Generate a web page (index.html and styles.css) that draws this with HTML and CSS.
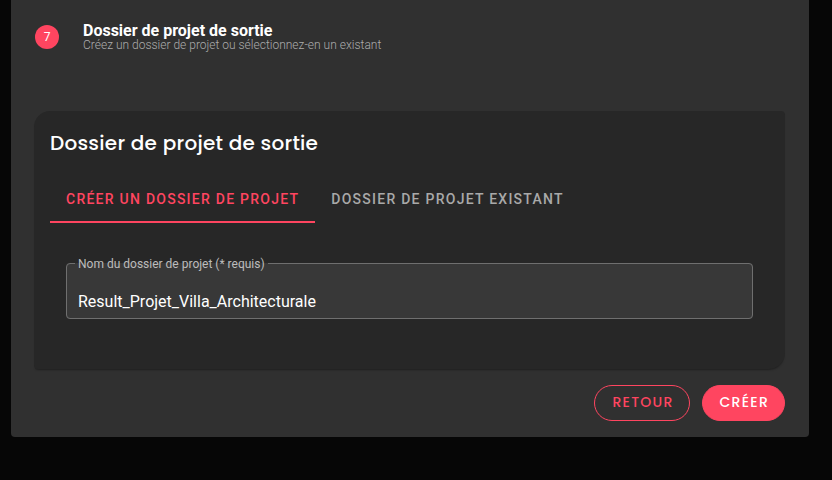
FILE: index.html
```html
<!DOCTYPE html>
<html lang="fr">
<head>
    <meta charset="UTF-8">
    <meta name="viewport" content="width=device-width, initial-scale=1.0">
    <title>Dossier de projet de sortie</title>
    <link rel="stylesheet" href="styles.css">
</head>
<body>
    <main class="stepper">
        <header class="step-header">
            <span class="step-number">7</span>
            <div class="step-label">
                <h1>Dossier de projet de sortie</h1>
                <p>Créez un dossier de projet ou sélectionnez-en un existant</p>
            </div>
        </header>

        <form id="output-form">
            <section class="card">
                <h2>Dossier de projet de sortie</h2>

                <div class="tabs" role="tablist">
                    <button type="button" class="tab active" role="tab" aria-selected="true">Créer un dossier de projet</button>
                    <button type="button" class="tab" role="tab" aria-selected="false">Dossier de projet existant</button>
                </div>

                <fieldset class="field">
                    <legend><label for="folder-name">Nom du dossier de projet (* requis)</label></legend>
                    <input type="text" id="folder-name" value="Result_Projet_Villa_Architecturale" required>
                </fieldset>
            </section>

            <div class="actions">
                <button type="button" class="btn btn-outlined">Retour</button>
                <button type="submit" class="btn btn-primary">Créer</button>
            </div>
        </form>
    </main>

    <script>
        const tabs = document.querySelectorAll('.tab');

        tabs.forEach(function (tab) {
            tab.addEventListener('click', function () {
                tabs.forEach(function (t) {
                    t.classList.toggle('active', t === tab);
                    t.setAttribute('aria-selected', t === tab);
                });
            });
        });

        document.getElementById('output-form').addEventListener('submit', function (event) {
            event.preventDefault();
        });
    </script>
</body>
</html>
```
FILE: styles.css
```css
* {
    box-sizing: border-box;
}

body {
    margin: 0;
    background: #060606;
    color: #fff;
    font-family: Roboto, sans-serif;
}

h1, h2, p {
    margin: 0;
}

.stepper {
    margin: 0 23px 43px 11px;
    padding: 0 24px 16px 23px;
    background: #303030;
    border-radius: 0 0 4px 4px;
}

.step-header {
    display: flex;
    align-items: center;
    gap: 24px;
    padding: 21px 1px 59px;
}

.step-number {
    width: 24px;
    height: 24px;
    border-radius: 50%;
    background: #ff4560;
    font-size: 12px;
    line-height: 24px;
    text-align: center;
}

.step-label {
    padding-top: 2px;
}

.step-label h1 {
    font-size: 16px;
    font-weight: 700;
    line-height: 16px;
}

.step-label p {
    color: #acacac;
    font-size: 12px;
    font-weight: 300;
    line-height: 13px;
}

.card {
    padding: 16px 16px 50px;
    background: #272727;
    border-radius: 16px 4px 16px 4px;
    box-shadow: 0 2px 2px -1px rgba(0, 0, 0, 0.35);
}

.card h2 {
    font-family: Poppins, Inter, sans-serif;
    font-size: 20px;
    font-weight: 500;
    line-height: 32px;
    letter-spacing: 0.0125em;
}

.tabs {
    display: flex;
    margin-top: 16px;
}

.tab {
    height: 48px;
    padding: 2px 16px 0;
    background: none;
    border: none;
    border-bottom: 2px solid transparent;
    color: #a9a9a9;
    font-family: inherit;
    font-size: 14px;
    font-weight: 500;
    letter-spacing: 0.0892857143em;
    text-transform: uppercase;
    cursor: pointer;
}

.tab.active {
    border-color: #ff4560;
    color: #ff4560;
}

.field {
    margin: 32px 16px 0;
    padding: 0 8px;
    background: #383838;
    border: 1px solid #6f6f6f;
    border-radius: 4px;
}

.field legend {
    padding: 2px 3px 0;
    color: #bcbcbc;
    font-size: 12px;
    line-height: 14px;
}

.field input {
    display: block;
    width: 100%;
    height: 47px;
    padding: 13px 3px 0;
    background: none;
    border: none;
    outline: none;
    color: #fff;
    font-family: inherit;
    font-size: 16px;
}

.actions {
    display: flex;
    justify-content: flex-end;
    gap: 12px;
    margin-top: 16px;
}

.btn {
    height: 36px;
    padding: 0 15px 2px 17px;
    border: 1px solid #ff4560;
    border-radius: 18px;
    font-family: Poppins, Inter, sans-serif;
    font-size: 14px;
    font-weight: 500;
    letter-spacing: 0.0892857143em;
    text-transform: uppercase;
    cursor: pointer;
}

.btn-outlined {
    background: none;
    color: #ff4560;
}

.btn-primary {
    background: #ff4560;
    color: #fff;
}
```
